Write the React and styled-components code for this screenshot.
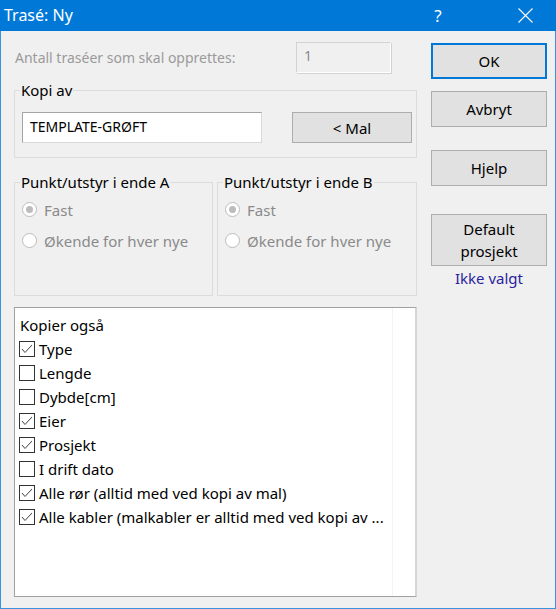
import React from 'react'
import styled, { createGlobalStyle } from 'styled-components'

const GlobalStyle = createGlobalStyle`
  html, body {
    margin: 0;
    padding: 0;
    background: #f0f0f0;
  }
  body {
    font-family: "Noto Sans", "Open Sans", sans-serif;
  }
`

const Window = styled.div`
  width: 556px;
  height: 609px;
  box-sizing: border-box;
  display: flex;
  flex-direction: column;
  background: #f0f0f0;
  border: 1px solid #3a93dc;
  border-top: none;
  font-size: 15px;
  color: #000;
`

const TitleBar = styled.div`
  height: 31px;
  flex: none;
  margin: 0 -1px;
  display: flex;
  align-items: center;
  background: #0078d7;
  color: #fff;
  padding-left: 4px;
`

const Title = styled.div`
  flex: 1;
  font-size: 16px;
  line-height: 31px;
`

const TitleButton = styled.div`
  width: 46px;
  height: 31px;
  display: flex;
  align-items: center;
  justify-content: center;
  font-size: 17px;
  margin-right: ${p => p.$gap || 0}px;
`

const Body = styled.div`
  flex: 1;
  display: flex;
  gap: 14px;
  padding: 11px 9px 11px 13px;
  min-height: 0;
`

const LeftCol = styled.div`
  width: 403px;
  display: flex;
  flex-direction: column;
`

const RightCol = styled.div`
  width: 116px;
  display: flex;
  flex-direction: column;
  padding-top: 1px;
`

const CountRow = styled.div`
  height: 31px;
  display: flex;
  align-items: center;
`

const DimLabel = styled.div`
  flex: 1;
  color: #9a9a9a;
  font-size: 14px;
  padding-left: 1px;
`

const DisabledInput = styled.div`
  width: 95px;
  height: 31px;
  box-sizing: border-box;
  margin-right: 26px;
  border: 1px solid #d2d2d2;
  border-right-color: #fff;
  border-bottom-color: #fff;
  box-shadow: 1px 1px 0 #d2d2d2;
  padding: 3px 0 0 7px;
  color: #8a8a8a;
  font-size: 14px;
`

const Group = styled.fieldset`
  margin: ${p => p.$top || 0}px 0 0;
  border: 1px solid #dcdcdc;
  padding: ${p => p.$pad};
  min-width: 0;
`

const Legend = styled.legend`
  padding: 0 1px;
  margin-left: -2px;
  line-height: 16px;
`

const KopiRow = styled.div`
  display: flex;
  align-items: center;
  justify-content: space-between;
`

const TextInput = styled.div`
  width: 240px;
  height: 31px;
  box-sizing: border-box;
  background: #fff;
  border: 1px solid #a5a5a5;
  border-right-color: #d8d8d8;
  border-bottom-color: #d8d8d8;
  padding: 4px 0 0 7px;
  font-size: 14px;
`

const Button = styled.div`
  width: ${p => p.$w || 116}px;
  height: ${p => p.$h || 36}px;
  box-sizing: border-box;
  margin-top: ${p => p.$top || 0}px;
  background: #e1e1e1;
  border: 1px solid ${p => (p.$default ? '#0078d7' : '#adadad')};
  box-shadow: ${p => (p.$default ? 'inset 0 0 0 1px #0078d7' : 'none')};
  display: flex;
  align-items: center;
  justify-content: center;
  text-align: center;
  line-height: 22px;
`

const GroupRow = styled.div`
  display: grid;
  grid-template-columns: 199px 200px;
  gap: 4px;
  margin-top: 16px;
`

const RadioRow = styled.div`
  height: 31px;
  display: flex;
  align-items: center;
  gap: 7px;
  color: #8a8a8a;
`

const RadioCircle = styled.span`
  width: 15px;
  height: 15px;
  box-sizing: border-box;
  border-radius: 50%;
  border: 1px solid #bcbcbc;
  background: #fff;
  display: flex;
  align-items: center;
  justify-content: center;
  &::after {
    content: '';
    width: 7px;
    height: 7px;
    border-radius: 50%;
    background: ${p => (p.$on ? '#bcbcbc' : 'transparent')};
  }
`

const ListBox = styled.div`
  flex: 1;
  margin-top: 11px;
  background: #fff;
  border: 1px solid #a0a0a0;
  border-right: 2px solid #d6d6d6;
  display: flex;
`

const ListInner = styled.div`
  width: 377px;
  border-right: 1px solid #f3f3f3;
  padding-top: 5px;
`

const ListHeader = styled.div`
  height: 24px;
  line-height: 24px;
  padding-left: 5px;
`

const CheckRow = styled.div`
  height: 24px;
  display: flex;
  align-items: center;
  gap: 4px;
  padding-left: 4px;
  white-space: nowrap;
`

const Box = styled.span`
  width: 16px;
  height: 16px;
  box-sizing: border-box;
  border: 1px solid #333;
  background: #fff;
  display: flex;
  align-items: center;
  justify-content: center;
`

const Note = styled.div`
  margin-top: 2px;
  text-align: center;
  color: #2b1fa0;
  line-height: 20px;
`

function Check({ on }) {
  return (
    <Box>
      {on && (
        <svg width="14" height="14" viewBox="0 0 14 14">
          <polyline points="2,7 5,10.5 12,3" fill="none" stroke="#444" strokeWidth="1" />
        </svg>
      )}
    </Box>
  )
}

const items = [
  { label: 'Type', on: true },
  { label: 'Lengde', on: false },
  { label: 'Dybde[cm]', on: false },
  { label: 'Eier', on: true },
  { label: 'Prosjekt', on: true },
  { label: 'I drift dato', on: false },
  { label: 'Alle rør (alltid med ved kopi av mal)', on: true },
  { label: 'Alle kabler (malkabler er alltid med ved kopi av ...', on: true },
]

function EndGroup({ title }) {
  return (
    <Group $pad="4px 0 39px 7px">
      <Legend>{title}</Legend>
      <RadioRow>
        <RadioCircle $on />
        Fast
      </RadioRow>
      <RadioRow>
        <RadioCircle />
        Økende for hver nye
      </RadioRow>
    </Group>
  )
}

export default function App() {
  return (
    <>
      <GlobalStyle />
      <Window>
        <TitleBar>
          <Title>Trasé: Ny</Title>
          <TitleButton $gap={41}>?</TitleButton>
          <TitleButton $gap={8}>
            <svg width="15" height="15" viewBox="0 0 15 15">
              <path d="M0.5 0.5 L14.5 14.5 M14.5 0.5 L0.5 14.5" stroke="#fff" strokeWidth="1.1" />
            </svg>
          </TitleButton>
        </TitleBar>
        <Body>
          <LeftCol>
            <CountRow>
              <DimLabel>Antall traséer som skal opprettes:</DimLabel>
              <DisabledInput>1</DisabledInput>
            </CountRow>
            <Group $top={9} $pad="14px 4px 14px 7px">
              <Legend>Kopi av</Legend>
              <KopiRow>
                <TextInput>TEMPLATE-GRØFT</TextInput>
                <Button $w={120} $h={31}>&lt; Mal</Button>
              </KopiRow>
            </Group>
            <GroupRow>
              <EndGroup title="Punkt/utstyr i ende A" />
              <EndGroup title="Punkt/utstyr i ende B" />
            </GroupRow>
            <ListBox>
              <ListInner>
                <ListHeader>Kopier også</ListHeader>
                {items.map(item => (
                  <CheckRow key={item.label}>
                    <Check on={item.on} />
                    {item.label}
                  </CheckRow>
                ))}
              </ListInner>
            </ListBox>
          </LeftCol>
          <RightCol>
            <Button $default>OK</Button>
            <Button $top={12}>Avbryt</Button>
            <Button $top={23}>Hjelp</Button>
            <Button $top={28} $h={52}>Default<br />prosjekt</Button>
            <Note>Ikke valgt</Note>
          </RightCol>
        </Body>
      </Window>
    </>
  )
}
